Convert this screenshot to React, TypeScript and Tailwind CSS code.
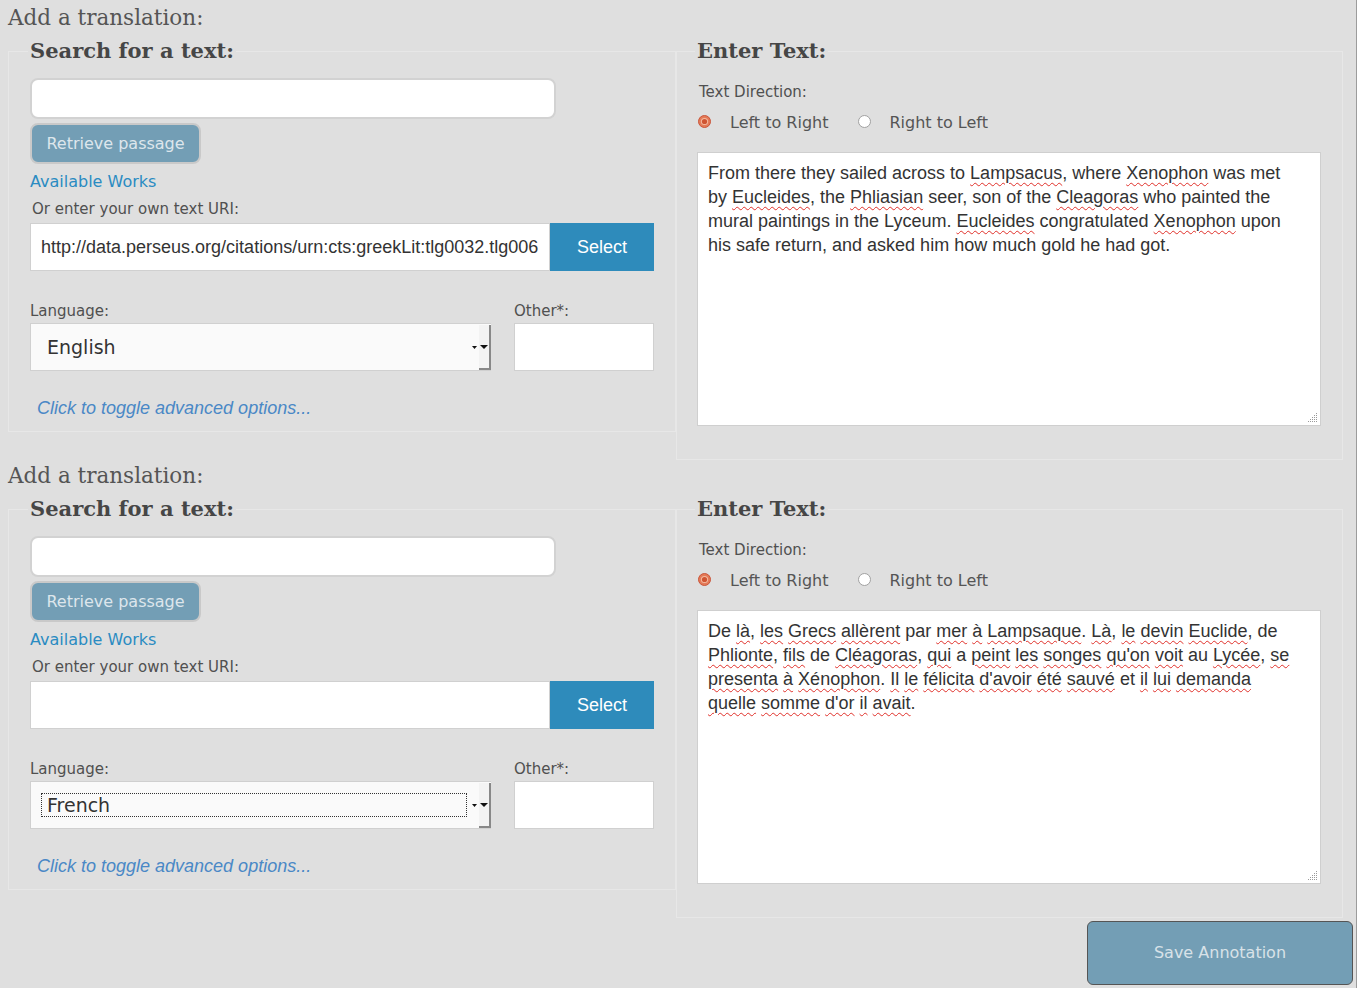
import React from 'react';

const EN_LINES = [
  'From there they sailed across to ~Lampsacus~, where ~Xenophon~ was met',
  'by ~Eucleides~, the ~Phliasian~ seer, son of the ~Cleagoras~ who painted the',
  'mural paintings in the Lyceum. ~Eucleides~ congratulated ~Xenophon~ upon',
  'his safe return, and asked him how much gold he had got.',
];

const FR_LINES = [
  'De ~là~, ~les~ ~Grecs~ ~allèrent~ par ~mer~ ~à~ ~Lampsaque~. ~Là~, ~le~ ~devin~ ~Euclide~, de',
  "~Phlionte~, ~fils~ de ~Cléagoras~, ~qui~ a ~peint~ ~les~ ~songes~ ~qu'on~ ~voit~ au ~Lycée~, ~se~",
  "~presenta~ ~à~ ~Xénophon~. ~Il~ ~le~ ~félicita~ ~d'avoir~ ~été~ ~sauvé~ et ~il~ ~lui~ ~demanda~",
  "~quelle~ ~somme~ ~d'or~ ~il~ ~avait~.",
];

// words between ~ ~ get the spell-check squiggle
function Line({ text }: { text: string }) {
  const parts = text.split('~');
  return (
    <div className="whitespace-nowrap">
      {parts.map((p, i) =>
        i % 2 === 1 ? (
          <span key={i} className="underline decoration-wavy decoration-[#e0302a] decoration-1 underline-offset-[3px]">
            {p}
          </span>
        ) : (
          <span key={i}>{p}</span>
        )
      )}
    </div>
  );
}

function Legend({ children }: { children: React.ReactNode }) {
  return (
    <legend className="-ml-[2px] px-[2px] h-[28px] leading-[28px] font-['DejaVu_Serif',serif] font-bold text-[21px] text-[#464646]">
      {children}
    </legend>
  );
}

function Arrow({ w, h }: { w: number; h: number }) {
  return (
    <svg width={w} height={h} viewBox={`0 0 ${w} ${h}`}>
      <polygon points={`0,0 ${w},0 ${w / 2},${h}`} fill="#111" />
    </svg>
  );
}

function Radio({ checked }: { checked: boolean }) {
  return checked ? (
    <svg width="13" height="13" viewBox="0 0 13 13" className="mt-[3px] shrink-0">
      <circle cx="6.5" cy="6.5" r="6" fill="#e47a57" stroke="#c9553a" />
      <circle cx="6.5" cy="6.5" r="3.6" fill="#f3b9a0" />
      <circle cx="6.5" cy="6.5" r="2.6" fill="#cf5432" />
    </svg>
  ) : (
    <svg width="13" height="13" viewBox="0 0 13 13" className="mt-[3px] shrink-0">
      <circle cx="6.5" cy="6.5" r="6" fill="#fff" stroke="#a0a0a0" />
    </svg>
  );
}

function ResizeGrip() {
  const dots = [
    [8, 0], [6, 2], [8, 2], [4, 4], [6, 4], [8, 4], [2, 6], [4, 6], [6, 6], [8, 6], [0, 8], [2, 8], [4, 8], [6, 8], [8, 8],
  ];
  return (
    <svg width="10" height="10" viewBox="0 0 10 10" className="absolute right-[2px] bottom-[2px]">
      {dots.map(([x, y], i) => (
        <rect key={i} x={x} y={y} width="1" height="1" fill="#9a9a9a" />
      ))}
    </svg>
  );
}

function Section({ uri, language, focused, lines }: { uri: string; language: string; focused: boolean; lines: string[] }) {
  return (
    <div>
      <h2 className="h-[26px] leading-[26px] font-['DejaVu_Serif',serif] text-[21.5px] text-[#555]">Add a translation:</h2>
      <div className="mt-[6px] flex items-start">
        {/* search side */}
        <fieldset className="w-[667px] border border-[#e7e7e7] px-[21px] pb-[11px]">
          <Legend>Search for a text:</Legend>
          <div className="mt-[13px] w-[526px] h-[41px] rounded-[8px] border-2 border-[#d2d2d2] bg-white" />
          <button className="mt-[4px] block w-[171px] h-[41px] rounded-[8px] border-2 border-[#c9c9c9] bg-[#739eb5] font-['DejaVu_Sans',sans-serif] text-[16px] text-[#dde6ec]">
            Retrieve passage
          </button>
          <div className="mt-[7px] leading-[22px] font-['DejaVu_Sans',sans-serif] text-[16px] text-[#2a8bc2]">Available Works</div>
          <div className="mt-[5px] pl-[2px] leading-[22px] font-['DejaVu_Sans',sans-serif] text-[15px] text-[#505050]">Or enter your own text URI:</div>
          <div className="mt-[3px] flex h-[48px]">
            <div className="w-[520px] border border-[#d0d0d0] bg-white pl-[10px] flex items-center overflow-hidden whitespace-nowrap font-['Liberation_Sans',Arial,sans-serif] text-[18px] text-[#333]">
              {uri}
            </div>
            <button className="w-[104px] bg-[#2e8bbb] text-white font-['Liberation_Sans',Arial,sans-serif] text-[18px]">Select</button>
          </div>
          <div className="mt-[29px] flex leading-[22px] font-['DejaVu_Sans',sans-serif] text-[15px] text-[#505050]">
            <span className="w-[484px]">Language:</span>
            <span>Other*:</span>
          </div>
          <div className="mt-[1px] flex gap-[23px]">
            <div className="w-[461px] h-[48px] flex items-center border border-[#d0d0d0] border-r-0 bg-[#fafafa] pl-[10px]">
              <div
                className={`w-[426px] h-[24px] px-[5px] flex items-center border border-dotted font-['DejaVu_Sans',sans-serif] text-[19px] text-[#333] ${
                  focused ? 'border-[#333]' : 'border-transparent'
                }`}
              >
                {language}
              </div>
              <div className="ml-[5px] mt-[1px]">
                <Arrow w={5} h={3} />
              </div>
              <div className="ml-auto self-stretch mt-[1px] w-[12px] flex items-center justify-center bg-[#f3f3f3] border-r-2 border-b-2 border-[#888]">
                <Arrow w={8} h={4} />
              </div>
            </div>
            <div className="w-[140px] h-[48px] border border-[#d0d0d0] bg-white" />
          </div>
          <div className="mt-[25px] pl-[7px] leading-[24px] italic font-['Liberation_Sans',Arial,sans-serif] text-[18px] text-[#4a88c6]">
            Click to toggle advanced options...
          </div>
        </fieldset>

        {/* text side */}
        <fieldset className="w-[667px] border border-[#e7e7e7] pl-[20px] pr-[21px] pb-[33px]">
          <Legend>Enter Text:</Legend>
          <div className="mt-[16px] pl-[2px] leading-[22px] font-['DejaVu_Sans',sans-serif] text-[15px] text-[#505050]">Text Direction:</div>
          <div className="mt-[9px] flex items-start leading-[22px] font-['DejaVu_Sans',sans-serif] text-[16px] text-[#555]">
            <span className="ml-[1px] flex"><Radio checked /></span>
            <span className="ml-[19px]">Left to Right</span>
            <span className="ml-[30px] flex"><Radio checked={false} /></span>
            <span className="ml-[18px]">Right to Left</span>
          </div>
          <div className="relative mt-[18px] h-[274px] border border-[#cfcfcf] bg-white pl-[10px] pt-[8px] leading-[24px] font-['Liberation_Sans',Arial,sans-serif] text-[18px] text-[#333]">
            {lines.map((l, i) => (
              <Line key={i} text={l} />
            ))}
            <ResizeGrip />
          </div>
        </fieldset>
      </div>
    </div>
  );
}

export default function App() {
  return (
    <div className="min-h-screen bg-[#dfdfdf] border-r border-[#9c9c9c] pl-[8px] pt-[5px] pb-[4px]">
      <Section uri="http://data.perseus.org/citations/urn:cts:greekLit:tlg0032.tlg006" language="English" focused={false} lines={EN_LINES} />
      <div className="h-[3px]" />
      <Section uri="" language="French" focused lines={FR_LINES} />
      <div className="mt-[3px] flex justify-end pr-[3px]">
        <button className="w-[266px] h-[64px] rounded-[6px] border border-[#555] bg-[#739eb5] font-['DejaVu_Sans',sans-serif] text-[16px] text-[#d8e2e8]">
          Save Annotation
        </button>
      </div>
    </div>
  );
}
